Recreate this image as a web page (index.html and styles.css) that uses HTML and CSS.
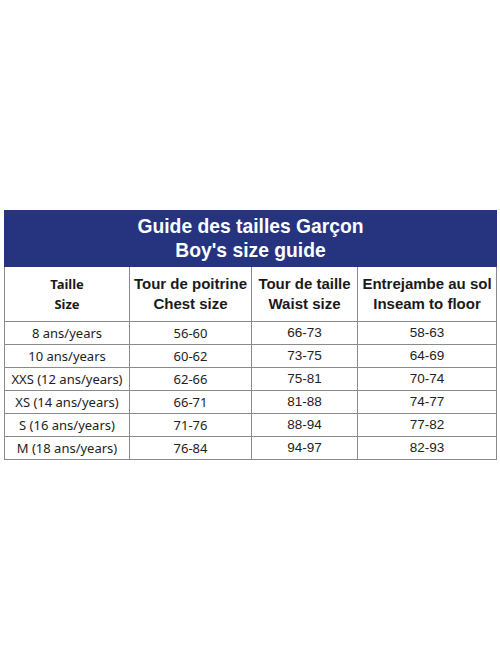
FILE: index.html
```html
<!DOCTYPE html>
<html lang="fr">

<head>
    <meta charset="UTF-8" />
    <meta name="viewport" content="width=device-width, initial-scale=1.0" />
    <title>Guide des tailles</title>
    <link rel="stylesheet" href="styles.css">
</head>

<body>
    <div class="guide">
        <table class="size-table">
            <colgroup>
                <col class="col-size">
                <col class="col-chest">
                <col class="col-waist">
                <col class="col-inseam">
            </colgroup>
            <thead>
                <tr>
                    <th class="title" colspan="4">Guide des tailles Garçon<br>Boy's size guide</th>
                </tr>
                <tr class="head">
                    <th class="head-size">Taille<br>Size</th>
                    <th>Tour de poitrine<br>Chest size</th>
                    <th>Tour de taille<br>Waist size</th>
                    <th>Entrejambe au sol<br>Inseam to floor</th>
                </tr>
            </thead>
            <tbody>
                <tr><td class="soft">8 ans/years</td><td class="soft">56-60</td><td>66-73</td><td>58-63</td></tr>
                <tr><td class="soft">10 ans/years</td><td class="soft">60-62</td><td>73-75</td><td>64-69</td></tr>
                <tr><td class="soft">XXS (12 ans/years)</td><td class="soft">62-66</td><td>75-81</td><td>70-74</td></tr>
                <tr><td class="soft">XS (14 ans/years)</td><td class="soft">66-71</td><td>81-88</td><td>74-77</td></tr>
                <tr><td class="soft">S (16 ans/years)</td><td class="soft">71-76</td><td>88-94</td><td>77-82</td></tr>
                <tr><td class="soft">M (18 ans/years)</td><td class="soft">76-84</td><td>94-97</td><td>82-93</td></tr>
            </tbody>
        </table>
    </div>
</body>

</html>
```

FILE: styles.css
```css
body,
html {
    margin: 0;
    padding: 0;
    background-color: #fff;
}

.guide {
    padding: 210px 4px 0 4px;
}

.size-table {
    width: 492px;
    border-collapse: collapse;
    table-layout: fixed;
    font-family: "Liberation Sans", Arial, sans-serif;
    color: #222;
}

.col-size { width: 125px; }
.col-chest { width: 122px; }
.col-waist { width: 106px; }
.col-inseam { width: 139px; }

.size-table th,
.size-table td {
    border: 1px solid #8a8a8a;
    padding: 0;
    text-align: center;
}

.size-table .title {
    height: 55px;
    background-color: #26347f;
    border-color: #26347f;
    color: #fff;
    font-size: 19.3px;
    line-height: 24px;
    font-weight: bold;
}

.head th {
    height: 54px;
    font-size: 15px;
    line-height: 20px;
    font-weight: bold;
    color: #1a1a1a;
}

.head .head-size {
    font-family: "Noto Sans", "Open Sans", sans-serif;
    font-size: 13px;
}

.size-table td {
    height: 22px;
    font-size: 13.5px;
    line-height: 16px;
    color: #222;
}

.size-table td.soft {
    font-family: "Noto Sans", "Open Sans", sans-serif;
    font-size: 13px;
}
```
